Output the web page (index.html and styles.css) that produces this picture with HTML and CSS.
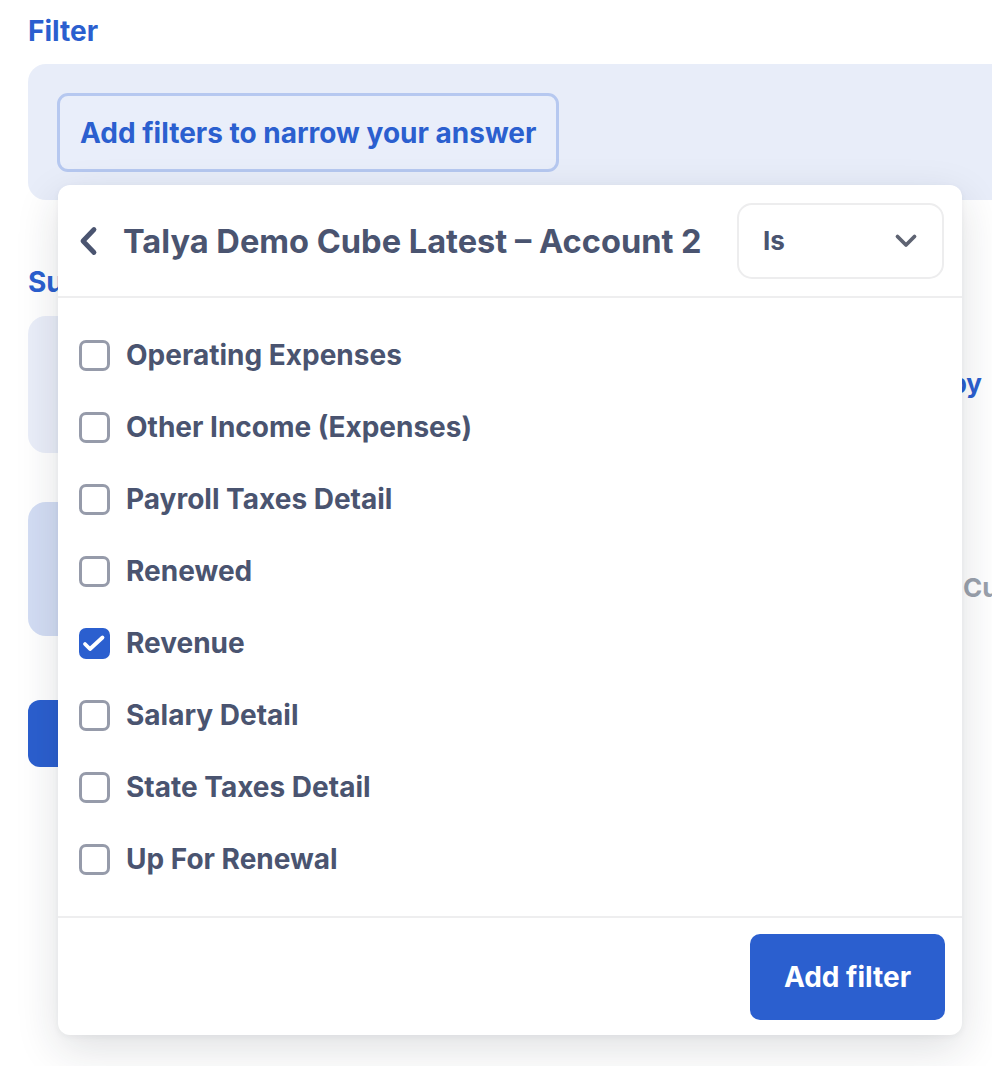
FILE: index.html
```html
<!DOCTYPE html>
<html lang="en">
<head>
<meta charset="utf-8">
<title>Filter</title>
<link rel="stylesheet" href="styles.css">
</head>
<body>
<div class="page">
  <h2 class="section-title">Filter</h2>
  <div class="filter-panel">
    <button class="narrow-btn">Add filters to narrow your answer</button>
  </div>

  <h2 class="section-title second">Suggested</h2>
  <div class="suggest-row">
    <div class="card card-light"></div>
    <div class="side-text side-blue">Copy</div>
  </div>
  <div class="suggest-row second-row">
    <div class="card card-mid"></div>
    <div class="side-text side-gray">Customers</div>
  </div>
  <div class="card card-blue"></div>

  <div class="popup">
    <div class="popup-head">
      <button class="back" aria-label="Back">
        <svg width="20" height="30" viewBox="0 0 20 30"><path d="M16 3.5 L5 15 L16 26.5" fill="none" stroke="#4A5470" stroke-width="4.8" stroke-linecap="round" stroke-linejoin="round"/></svg>
      </button>
      <div class="popup-title">Talya Demo Cube Latest – Account 2</div>
      <div class="select">
        <span>Is</span>
        <svg width="24" height="16" viewBox="0 0 24 16"><path d="M3.5 3.5 L12 12 L20.5 3.5" fill="none" stroke="#5E6372" stroke-width="3.8" stroke-linecap="round" stroke-linejoin="round"/></svg>
      </div>
    </div>
    <ul class="options">
      <li><span class="box"></span>Operating Expenses</li>
      <li><span class="box"></span>Other Income (Expenses)</li>
      <li><span class="box"></span>Payroll Taxes Detail</li>
      <li><span class="box"></span>Renewed</li>
      <li><span class="box checked"><svg width="31" height="31" viewBox="0 0 31 31"><path d="M6 16 L11 21 L23.5 9.5" fill="none" stroke="#fff" stroke-width="3.8" stroke-linecap="round" stroke-linejoin="round"/></svg></span>Revenue</li>
      <li><span class="box"></span>Salary Detail</li>
      <li><span class="box"></span>State Taxes Detail</li>
      <li><span class="box"></span>Up For Renewal</li>
    </ul>
    <div class="popup-foot">
      <button class="add-btn">Add filter</button>
    </div>
  </div>
</div>
</body>
</html>
```

FILE: styles.css
```css
* { box-sizing: border-box; }
html, body {
  margin: 0;
  padding: 0;
  background: #ffffff;
  overflow: hidden;
  height: 1066px;
}
body {
  font-family: Inter, "Noto Sans", sans-serif;
}
.page {
  position: relative;
  width: 1200px;
  padding: 14px 0 0 28px;
}
.section-title {
  margin: 0;
  font-size: 28px;
  line-height: 34px;
  font-weight: 700;
  color: #2B5FCF;
}
.section-title.second {
  margin-top: 65px;
}
.filter-panel {
  margin-top: 16px;
  height: 136px;
  background: #E8EDF9;
  border-radius: 18px;
  padding: 29px;
}
.narrow-btn {
  height: 79px;
  padding: 0 20px;
  background: #E9EEFA;
  border: 3px solid #B6C8F0;
  border-radius: 11px;
  font-family: inherit;
  font-size: 28px;
  font-weight: 700;
  color: #2B5FCF;
}
.suggest-row {
  display: flex;
  align-items: flex-start;
  width: 954px;
  margin-top: 17px;
}
.second-row {
  margin-top: 49px;
}
.card {
  width: 420px;
  flex: none;
  border-radius: 18px;
}
.card-light {
  height: 137px;
  background: #EAEEF9;
}
.card-mid {
  height: 134px;
  background: #D3DDF4;
}
.card-blue {
  margin-top: 64px;
  height: 67px;
  background: #2B5FCF;
  width: 300px;
  border-radius: 12px;
}
.side-text {
  font-size: 26px;
  line-height: 31px;
  font-weight: 700;
  white-space: nowrap;
}
.side-blue {
  margin-left: auto;
  color: #2B5FCF;
  margin-top: 52px;
}
.side-gray {
  margin-left: 515px;
  color: #9AA1AC;
  margin-top: 70px;
}
.popup {
  position: absolute;
  left: 58px;
  top: 185px;
  width: 904px;
  height: 850px;
  background: #ffffff;
  border-radius: 12px;
  box-shadow: 0 14px 44px rgba(30, 35, 50, 0.14), 0 2px 6px rgba(30, 35, 50, 0.05);
  display: flex;
  flex-direction: column;
}
.popup-head {
  display: flex;
  align-items: center;
  height: 113px;
  padding: 0 18px 0 20px;
  border-bottom: 2px solid #EEEEEF;
  flex: none;
}
.back {
  background: none;
  border: 0;
  padding: 0;
  width: 24px;
  display: flex;
  align-items: center;
}
.popup-title {
  margin-left: 21px;
  font-size: 32.6px;
  font-weight: 700;
  color: #4A5470;
  white-space: nowrap;
}
.select {
  margin-left: auto;
  width: 207px;
  height: 76px;
  border: 2px solid #EDEDEE;
  border-radius: 15px;
  display: flex;
  align-items: center;
  justify-content: space-between;
  padding: 0 24px 0 24px;
  font-size: 26px;
  font-weight: 700;
  color: #4A5470;
  flex: none;
}
.options {
  list-style: none;
  margin: 0;
  padding: 21px 0;
  flex: 1;
}
.options li {
  height: 72px;
  display: flex;
  align-items: center;
  padding-left: 21px;
  font-size: 28px;
  font-weight: 700;
  color: #4A5470;
}
.box {
  width: 31px;
  height: 31px;
  border: 3px solid #969BAA;
  border-radius: 7px;
  margin-right: 16px;
  flex: none;
  display: flex;
  align-items: center;
  justify-content: center;
}
.box.checked {
  background: #2B5FCF;
  border: 0;
}
.popup-foot {
  flex: none;
  border-top: 2px solid #EEEEEF;
  height: 119px;
  display: flex;
  justify-content: flex-end;
  align-items: flex-start;
  padding: 16px 17px 0 0;
}
.add-btn {
  width: 195px;
  height: 86px;
  background: #2B5FCF;
  color: #ffffff;
  border: 0;
  border-radius: 10px;
  font-family: inherit;
  font-size: 28px;
  font-weight: 700;
}
```
